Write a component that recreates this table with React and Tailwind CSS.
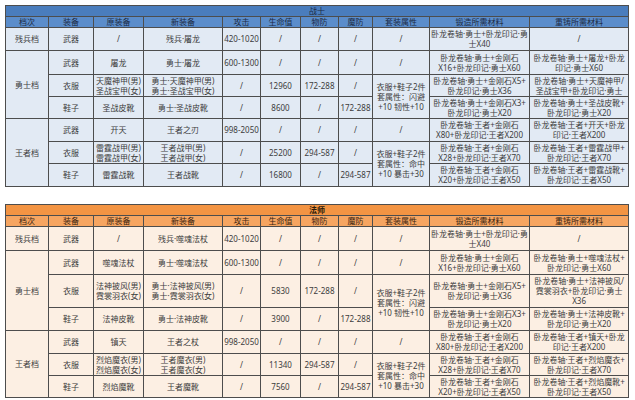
import React from "react";

const cols = ["w-[43px]", "w-[45px]", "w-[50px]", "w-[79px]", "w-[38px]", "w-[40px]", "w-[38px]", "w-[34px]", "w-[57px]", "w-[100px]", "w-[99px]"];
const heads = ["档次", "装备", "原装备", "新装备", "攻击", "生命值", "物防", "魔防", "套装属性", "锻造所需材料", "重铸所需材料"];

const setA = { l: ["衣服+鞋子2件", "套属性：闪避", "+10 韧性+10"], rs: 2 };
const setB = { l: ["衣服+鞋子2件", "套属性：命中", "+10 暴击+30"], rs: 2 };

const warrior = [
  { h: "h-[23px]", c: [["残兵档"], ["武器"], ["/"], ["残兵·屠龙"], ["420-1020"], ["/"], ["/"], ["/"], ["/"], ["卧龙卷轴·勇士+卧龙印记·勇", "士X40"], ["/"]] },
  { h: "h-[24px]", c: [{ l: ["勇士档"], rs: 3 }, ["武器"], ["屠龙"], ["勇士·屠龙"], ["600-1300"], ["/"], ["/"], ["/"], ["/"], ["卧龙卷轴·勇士+金刚石", "X16+卧龙印记·勇士X60"], ["卧龙卷轴·勇士+屠龙+卧龙", "印记·勇士X60"]] },
  { h: "h-[22px]", c: [["衣服"], ["天魔神甲(男)", "圣战宝甲(女)"], ["勇士·天魔神甲(男)", "勇士·圣战宝甲(女)"], ["/"], ["12960"], ["172-288"], ["/"], setA, ["卧龙卷轴·勇士+金刚石X5+", "卧龙印记·勇士X36"], ["卧龙卷轴·勇士+天魔神甲/", "圣战宝甲+卧龙印记·勇士"]] },
  { h: "h-[22px]", c: [["鞋子"], ["圣战皮靴"], ["勇士·圣战皮靴"], ["/"], ["8600"], ["/"], ["172-288"], ["卧龙卷轴·勇士+金刚石X3+", "卧龙印记·勇士X20"], ["卧龙卷轴·勇士+圣战皮靴+", "卧龙印记·勇士X20"]] },
  { h: "h-[23px]", c: [{ l: ["王者档"], rs: 3 }, ["武器"], ["开天"], ["王者之刃"], ["998-2050"], ["/"], ["/"], ["/"], ["/"], ["卧龙卷轴·王者+金刚石", "X80+卧龙印记·王者X200"], ["卧龙卷轴·王者+开天+卧龙", "印记·王者X200"]] },
  { h: "h-[22px]", c: [["衣服"], ["雷霆战甲(男)", "雷霆战甲(女)"], ["王者战甲(男)", "王者战甲(女)"], ["/"], ["25200"], ["294-587"], ["/"], setB, ["卧龙卷轴·王者+金刚石", "X28+卧龙印记·王者X70"], ["卧龙卷轴·王者+雷霆战甲+", "卧龙印记·王者X70"]] },
  { h: "h-[23px]", c: [["鞋子"], ["雷霆战靴"], ["王者战靴"], ["/"], ["16800"], ["/"], ["294-587"], ["卧龙卷轴·王者+金刚石", "X20+卧龙印记·王者X50"], ["卧龙卷轴·王者+雷霆战靴+", "卧龙印记·王者X50"]] },
];

const mage = [
  { h: "h-[24px]", c: [["残兵档"], ["武器"], ["/"], ["残兵·噬魂法杖"], ["420-1020"], ["/"], ["/"], ["/"], ["/"], ["卧龙卷轴·勇士+卧龙印记·勇", "士X40"], ["/"]] },
  { h: "h-[24px]", c: [{ l: ["勇士档"], rs: 3 }, ["武器"], ["噬魂法杖"], ["勇士·噬魂法杖"], ["600-1300"], ["/"], ["/"], ["/"], ["/"], ["卧龙卷轴·勇士+金刚石", "X16+卧龙印记·勇士X60"], ["卧龙卷轴·勇士+噬魂法杖+", "卧龙印记·勇士X60"]] },
  { h: "h-[33px]", c: [["衣服"], ["法神披风(男)", "霓裳羽衣(女)"], ["勇士·法神披风(男)", "勇士·霓裳羽衣(女)"], ["/"], ["5830"], ["172-288"], ["/"], setA, ["卧龙卷轴·勇士+金刚石X5+", "卧龙印记·勇士X36"], ["卧龙卷轴·勇士+法神披风/", "霓裳羽衣+卧龙印记·勇士", "X36"]] },
  { h: "h-[23px]", c: [["鞋子"], ["法神皮靴"], ["勇士·法神皮靴"], ["/"], ["3900"], ["/"], ["172-288"], ["卧龙卷轴·勇士+金刚石X3+", "卧龙印记·勇士X20"], ["卧龙卷轴·勇士+法神皮靴+", "卧龙印记·勇士X20"]] },
  { h: "h-[23px]", c: [{ l: ["王者档"], rs: 3 }, ["武器"], ["镇天"], ["王者之杖"], ["998-2050"], ["/"], ["/"], ["/"], ["/"], ["卧龙卷轴·王者+金刚石", "X80+卧龙印记·王者X200"], ["卧龙卷轴·王者+镇天+卧龙", "印记·王者X200"]] },
  { h: "h-[22px]", c: [["衣服"], ["烈焰魔衣(男)", "烈焰魔衣(女)"], ["王者魔衣(男)", "王者魔衣(女)"], ["/"], ["11340"], ["294-587"], ["/"], setB, ["卧龙卷轴·王者+金刚石", "X28+卧龙印记·王者X70"], ["卧龙卷轴·王者+烈焰魔衣+", "卧龙印记·王者X70"]] },
  { h: "h-[22px]", c: [["鞋子"], ["烈焰魔靴"], ["王者魔靴"], ["/"], ["7560"], ["/"], ["294-587"], ["卧龙卷轴·王者+金刚石", "X20+卧龙印记·王者X50"], ["卧龙卷轴·王者+烈焰魔靴+", "卧龙印记·王者X50"]] },
];

const themes = {
  blue: { title: "bg-[#4a7dbd] text-[#1c2b45]", head: "bg-[#5b8dcb] text-[#1c2b45]", body: "bg-[#e2eaf4]" },
  orange: { title: "bg-[#f39443] text-[#2a1a0a] font-bold", head: "bg-[#f6a561] text-[#3a2410]", body: "bg-[#fcefe3]" },
};

function GearTable({ title, rows, theme }) {
  const t = themes[theme];
  return (
    <table className="table-fixed border-collapse w-[623px] text-[#3d3d3d] text-[8px] leading-[10px] text-center">
      <colgroup>
        {cols.map((w, i) => (
          <col key={i} className={w} />
        ))}
      </colgroup>
      <tbody>
        <tr className="h-[11px]">
          <td colSpan={11} className={`border border-[#4d4d4d] p-0 ${t.title}`}>
            {title}
          </td>
        </tr>
        <tr className="h-[11px]">
          {heads.map((h) => (
            <td key={h} className={`border border-[#4d4d4d] p-0 ${t.head}`}>
              {h}
            </td>
          ))}
        </tr>
        {rows.map((row, ri) => (
          <tr key={ri} className={row.h}>
            {row.c.map((cell, ci) => {
              const lines = Array.isArray(cell) ? cell : cell.l;
              return (
                <td
                  key={ci}
                  rowSpan={cell.rs || 1}
                  className={`border border-[#4d4d4d] p-0 align-middle whitespace-nowrap overflow-hidden ${t.body}`}
                >
                  {lines.map((ln, li) => (
                    <div key={li}>{ln}</div>
                  ))}
                </td>
              );
            })}
          </tr>
        ))}
      </tbody>
    </table>
  );
}

export default function App() {
  return (
    <div className="w-[635px] h-[400px] bg-white pt-[5px] pl-[5px] flex flex-col gap-[17px] font-['Noto_Sans','Noto_Sans_CJK_SC',sans-serif]">
      <GearTable title="战士" rows={warrior} theme="blue" />
      <GearTable title="法师" rows={mage} theme="orange" />
    </div>
  );
}
